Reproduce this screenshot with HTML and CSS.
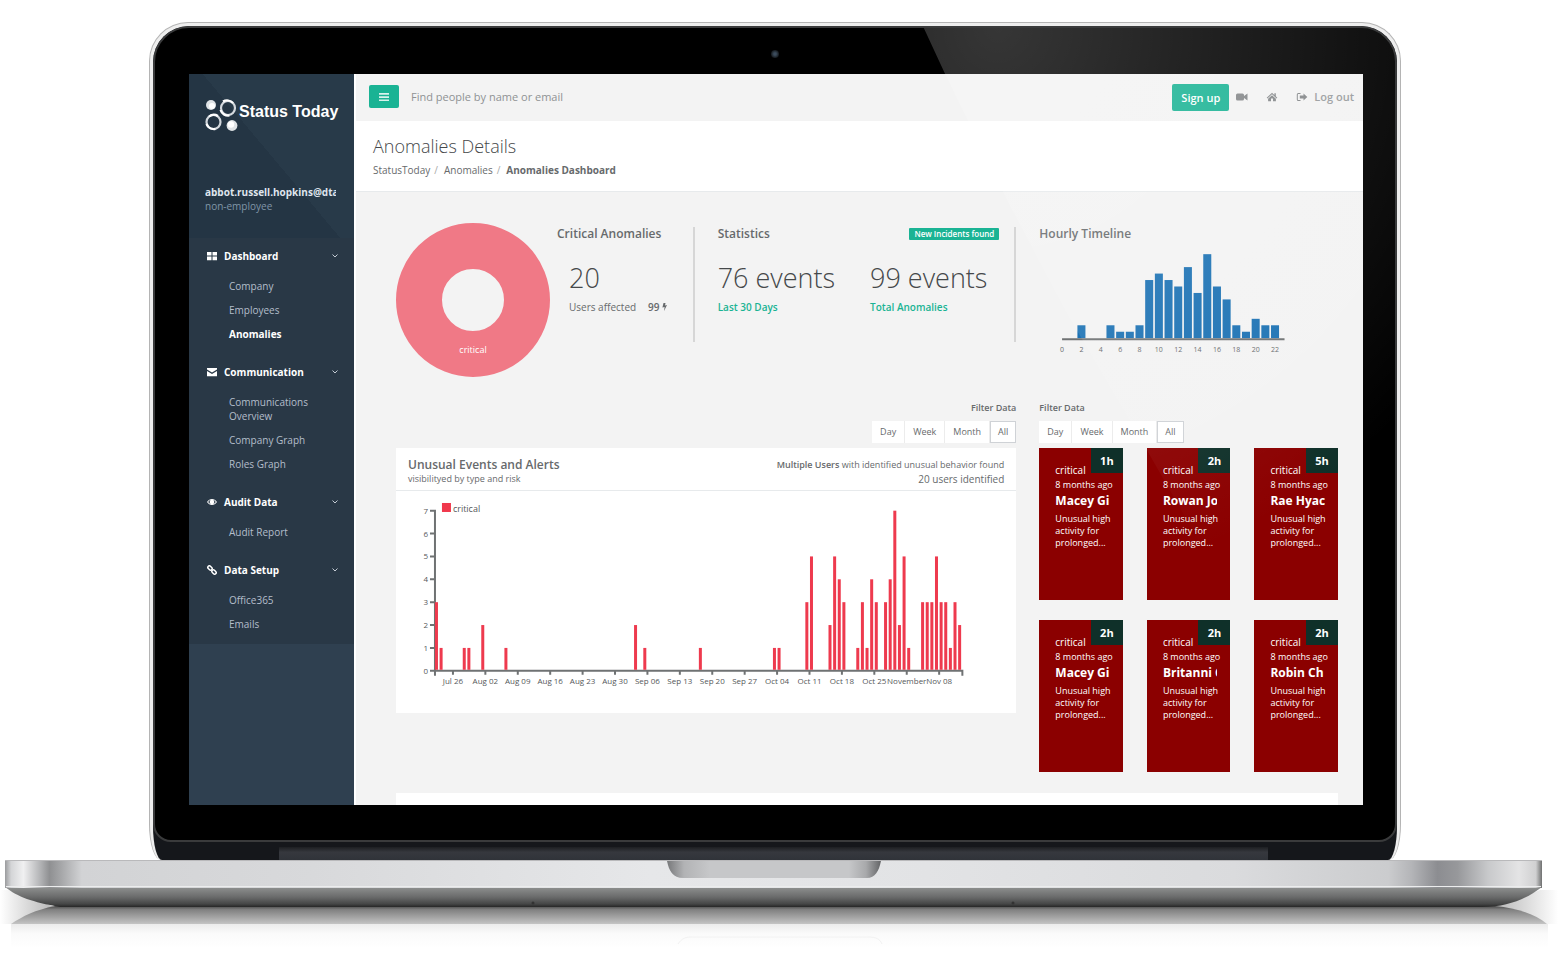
FILE: index.html
```html
<!DOCTYPE html>
<html lang="en">
<head>
<meta charset="utf-8">
<title>Status Today – Anomalies Details</title>
<link rel="stylesheet" href="styles.css">
</head>
<body>
<div class="lid">
  <div class="shell">
    <div class="bezel">
      <span class="camera"></span>
      <div class="screen">
        <aside class="sidebar">
          <header class="profile">
            <a class="brand" href="#">
              <svg class="brand-mark" viewBox="0 0 33 34" aria-hidden="true">
                <circle cx="6" cy="7" r="5" fill="#dfe3e6"/>
                <circle cx="7" cy="8" r="3" fill="#fff"/>
                <circle cx="23" cy="10" r="7" fill="none" stroke="#d3d8dd" stroke-width="2.200"/>
                <path d="M18 3.500a8 8 0 0 1 10 1.500M15.500 12a8 8 0 0 0 9 5.500" fill="none" stroke="#fff" stroke-width="2.200"/>
                <circle cx="8.500" cy="24" r="7" fill="none" stroke="#d3d8dd" stroke-width="2.200"/>
                <path d="M1.500 26a8 8 0 0 0 9 5M4 18.500a8 8 0 0 1 9-.5" fill="none" stroke="#fff" stroke-width="2.200"/>
                <circle cx="27" cy="27.500" r="5.400" fill="#dfe3e6"/>
                <circle cx="26" cy="26.500" r="3.200" fill="#fff"/>
              </svg>
              <span class="brand-name">Status Today</span>
            </a>
            <strong class="profile-mail">abbot.russell.hopkins@dtaa</strong>
            <span class="profile-role">non-employee</span>
          </header>
          <nav class="nav">
            <section class="nav-group">
              <button class="nav-head" type="button">
                <svg class="nav-icon" viewBox="0 0 10 10" aria-hidden="true"><path d="M0 1h4.500v3.600H0zM5.500 1H10v3.600H5.500zM0 5.600h4.500v3.600H0zM5.500 5.600H10v3.600H5.500z"/></svg>
                Dashboard
                <svg class="nav-arrow" viewBox="0 0 6 4" aria-hidden="true"><path d="M.5.5 3 3 5.500.5"/></svg>
              </button>
              <a class="nav-item" href="#">Company</a>
              <a class="nav-item" href="#">Employees</a>
              <a class="nav-item active" href="#">Anomalies</a>
            </section>
            <section class="nav-group">
              <button class="nav-head" type="button">
                <svg class="nav-icon" viewBox="0 0 10 10" aria-hidden="true"><path d="M0 1h10v1.500L5 5.500 0 2.500zM0 4l5 3 5-3v5.200H0z"/></svg>
                Communication
                <svg class="nav-arrow" viewBox="0 0 6 4" aria-hidden="true"><path d="M.5.5 3 3 5.500.5"/></svg>
              </button>
              <a class="nav-item" href="#">Communications Overview</a>
              <a class="nav-item" href="#">Company Graph</a>
              <a class="nav-item" href="#">Roles Graph</a>
            </section>
            <section class="nav-group">
              <button class="nav-head" type="button">
                <svg class="nav-icon" viewBox="0 0 10 10" aria-hidden="true"><path fill-rule="evenodd" d="M0 5c2.500-4 7.500-4 10 0-2.500 4-7.500 4-10 0zm1.200 0C2 6.200 2.800 6.800 3.600 7 2.400 5.800 2.400 4.200 3.600 3 2.800 3.200 2 3.800 1.200 5zm7.600 0C8 3.800 7.200 3.200 6.400 3c1.200 1.200 1.200 2.800 0 4 .8-.2 1.600-.8 2.400-2z"/></svg>
                Audit Data
                <svg class="nav-arrow" viewBox="0 0 6 4" aria-hidden="true"><path d="M.5.5 3 3 5.500.5"/></svg>
              </button>
              <a class="nav-item" href="#">Audit Report</a>
            </section>
            <section class="nav-group">
              <button class="nav-head" type="button">
                <svg class="nav-icon" viewBox="0 0 10 10" aria-hidden="true"><g fill="none" stroke="#fff" stroke-width="1.500"><rect x="-2.400" y="-1.500" width="4.800" height="3" rx="1.500" transform="translate(3 3) rotate(45)"/><rect x="-2.400" y="-1.500" width="4.800" height="3" rx="1.500" transform="translate(7 7) rotate(45)"/></g></svg>
                Data Setup
                <svg class="nav-arrow" viewBox="0 0 6 4" aria-hidden="true"><path d="M.5.5 3 3 5.500.5"/></svg>
              </button>
              <a class="nav-item" href="#">Office365</a>
              <a class="nav-item" href="#">Emails</a>
            </section>
          </nav>
        </aside>

        <main class="main">
          <div class="topbar">
            <button class="menu-toggle" type="button" aria-label="Toggle menu">
              <svg viewBox="0 0 10 10" aria-hidden="true"><path d="M0 1h10v1.700H0zM0 4.200h10v1.700H0zM0 7.400h10v1.700H0z"/></svg>
            </button>
            <input class="search" type="text" aria-label="Find people" placeholder="Find people by name or email">
            <button class="signup" type="button">Sign up</button>
            <a class="tool" href="#" aria-label="Video"><svg viewBox="0 0 12 10" aria-hidden="true"><path d="M1.500 1.500h5A1.500 1.500 0 0 1 8 3v1l3.500-2.500v7L8 6v1a1.500 1.500 0 0 1-1.500 1.500h-5A1.500 1.500 0 0 1 0 7V3a1.500 1.500 0 0 1 1.500-1.500z"/></svg></a>
            <a class="tool" href="#" aria-label="Home"><svg viewBox="0 0 12 10" aria-hidden="true"><path d="M6 .8 8.400 3V1.300h1.400v3L11.300 5.700l-.7.700L6 2.300 1.400 6.400l-.7-.7zM6 3.200l3.900 3.500V9.300H7V6.600H5v2.700H2.100V6.700z"/></svg></a>
            <a class="logout" href="#"><svg viewBox="0 0 12 10" aria-hidden="true"><path d="M4.500 1H2.300A1.500 1.500 0 0 0 .8 2.500v5A1.500 1.500 0 0 0 2.300 9h2.200V8H2.300a.5.5 0 0 1-.5-.5v-5a.5.5 0 0 1 .5-.5h2.200zM7.500 1.500 11.300 5 7.500 8.500v-2H3.800v-3h3.700z"/></svg>Log out</a>
          </div>

          <div class="heading">
            <h1>Anomalies Details</h1>
            <ol class="crumbs">
              <li><a href="#">StatusToday</a></li>
              <li><a href="#">Anomalies</a></li>
              <li><strong>Anomalies Dashboard</strong></li>
            </ol>
          </div>

          <div class="content">
            <section class="critical">
              <svg class="donut" viewBox="0 0 154 154" role="img" aria-label="critical">
                <circle cx="77" cy="77" r="54" fill="none" stroke="#f07986" stroke-width="46"/>
                <text x="77" y="130" text-anchor="middle">critical</text>
              </svg>
              <div class="critical-info">
                <h2>Critical Anomalies</h2>
                <div class="inset">
                  <p class="figure">20</p>
                  <p class="note"><span>Users affected</span><b>99 <svg viewBox="0 0 5 8" aria-hidden="true"><path d="M1.500 0h2L3 2.500 5 2 2 8l.6-4L.4 4.500z"/></svg></b></p>
                </div>
              </div>
            </section>

            <section class="stats">
              <div class="stats-head"><h2>Statistics</h2><span class="label">New Incidents found</span></div>
              <div class="stats-row">
                <div><p class="figure">76 events</p><p class="note green">Last 30 Days</p></div>
                <div><p class="figure">99 events</p><p class="note green">Total Anomalies</p></div>
              </div>
            </section>

            <section class="hourly">
              <h2>Hourly Timeline</h2>
              <svg id="hourly-chart" class="hourly-chart" viewBox="0 0 298 112" role="img" aria-label="Events by hour"></svg>
            </section>

            <section class="events">
              <div class="filter filter-end">
                <span class="filter-title">Filter Data</span>
                <div class="btn-group">
                  <button type="button">Day</button><button type="button">Week</button><button type="button">Month</button><button class="on" type="button">All</button>
                </div>
              </div>
              <div class="panel">
                <div class="panel-head">
                  <div><h2>Unusual Events and Alerts</h2><p class="small">visibilityed by type and risk</p></div>
                  <div class="panel-side"><p class="small"><b>Multiple Users</b> with identified unusual behavior found</p><p>20 users identified</p></div>
                </div>
                <svg id="events-chart" class="events-chart" viewBox="0 0 621 222" role="img" aria-label="Critical events by day"></svg>
              </div>
            </section>

            <section class="alerts">
              <div class="filter">
                <span class="filter-title">Filter Data</span>
                <div class="btn-group">
                  <button type="button">Day</button><button type="button">Week</button><button type="button">Month</button><button class="on" type="button">All</button>
                </div>
              </div>
              <div class="cards">
                <article class="card"><span class="age">1h</span><p class="level">critical</p><p class="when">8 months ago</p><h3>Macey Gi</h3><p class="desc">Unusual high activity for prolonged...</p></article>
                <article class="card"><span class="age">2h</span><p class="level">critical</p><p class="when">8 months ago</p><h3>Rowan Jo</h3><p class="desc">Unusual high activity for prolonged...</p></article>
                <article class="card"><span class="age">5h</span><p class="level">critical</p><p class="when">8 months ago</p><h3>Rae Hyac</h3><p class="desc">Unusual high activity for prolonged...</p></article>
                <article class="card"><span class="age">2h</span><p class="level">critical</p><p class="when">8 months ago</p><h3>Macey Gi</h3><p class="desc">Unusual high activity for prolonged...</p></article>
                <article class="card"><span class="age">2h</span><p class="level">critical</p><p class="when">8 months ago</p><h3>Britanni C</h3><p class="desc">Unusual high activity for prolonged...</p></article>
                <article class="card"><span class="age">2h</span><p class="level">critical</p><p class="when">8 months ago</p><h3>Robin Ch</h3><p class="desc">Unusual high activity for prolonged...</p></article>
              </div>
            </section>
            <section class="next-panel"></section>
          </div>
        </main>
      </div>
    </div>
    <div class="hinge"></div>
  </div>
</div>
<svg class="base" viewBox="0 0 1559 90" aria-hidden="true">
  <defs>
    <linearGradient id="metal">
      <stop offset="0" stop-color="#9a9b9d"/><stop offset=".004" stop-color="#d4d5d7"/><stop offset=".012" stop-color="#f0f0f1"/>
      <stop offset=".022" stop-color="#b8b9bb"/><stop offset=".029" stop-color="#8f9092"/><stop offset=".036" stop-color="#a4a5a7"/><stop offset=".05" stop-color="#d2d3d5"/>
      <stop offset=".2" stop-color="#d8d9db"/><stop offset=".42" stop-color="#e6e7e9"/><stop offset=".6" stop-color="#e2e3e5"/><stop offset=".8" stop-color="#dadbdd"/><stop offset=".9" stop-color="#cbccce"/>
      <stop offset=".915" stop-color="#b4b5b8"/><stop offset=".932" stop-color="#8c8d91"/><stop offset=".945" stop-color="#97989b"/><stop offset=".965" stop-color="#c8c9cb"/><stop offset=".985" stop-color="#e4e4e5"/><stop offset=".996" stop-color="#d0d0d1"/><stop offset="1" stop-color="#6f7070"/>
    </linearGradient>
    <linearGradient id="under" x2="0" y2="1">
      <stop offset="0" stop-color="#8f9190"/><stop offset=".5" stop-color="#6a6b6b"/><stop offset=".85" stop-color="#454646"/><stop offset="1" stop-color="#262626"/>
    </linearGradient>
    <linearGradient id="shade" x2="0" y2="1">
      <stop offset="0" stop-color="#4a4a4a"/><stop offset=".2" stop-color="#808080"/><stop offset="1" stop-color="#c4c4c4"/>
    </linearGradient>
    <linearGradient id="mirror" x2="0" y2="1">
      <stop offset="0" stop-color="#ececec"/><stop offset=".4" stop-color="#fafafa"/><stop offset="1" stop-color="#fff"/>
    </linearGradient>
    <linearGradient id="notch">
      <stop offset="0" stop-color="#77787a"/><stop offset=".08" stop-color="#b2b3b5"/><stop offset=".2" stop-color="#c6c7c9"/><stop offset=".85" stop-color="#c6c7c9"/><stop offset=".93" stop-color="#a8a9ab"/><stop offset="1" stop-color="#636466"/>
    </linearGradient>
    <linearGradient id="side-l"><stop offset="0" stop-color="#fff"/><stop offset="1" stop-color="#b4b4b4"/></linearGradient>
    <linearGradient id="side-r"><stop offset="0" stop-color="#b4b4b4"/><stop offset="1" stop-color="#fff"/></linearGradient>
  </defs>
  <path d="M0 30h8l47 17-43 17H0z" fill="url(#side-l)"/>
  <path d="M1558 30h-18l-48 17 55 17h11z" fill="url(#side-r)"/>
  <path d="M11 64h1537v24H11z" fill="url(#mirror)"/>
  <path d="M55 46h1440c22 2 40 8 52 18H11c12-8 24-14 44-18z" fill="url(#shade)"/>
  <path d="M678 84c4-6 8-7 14-7h176c8 0 12 2 14 7" fill="none" stroke="#f2f2f2"/>
  <path d="M5 27h1537c-16 12-34 20-60 20H60C32 42 18 37 5 27z" fill="url(#under)"/>
  <path d="M5 0h1537v28H5z" fill="url(#metal)"/>
  <path d="M5 0h1537v1H5z" fill="#b9b9bb"/>
  <path d="M6 26h1535v1H6z" fill="#eceded"/>
  <path d="M667 1h214c-2 10-6 17-14 17H683c-10 0-14-7-16-17z" fill="url(#notch)"/>
  <circle cx="533" cy="43" r="1.500" fill="#333"/><circle cx="1013" cy="43" r="1.500" fill="#333"/>
</svg>
<script src="charts.js"></script>
</body>
</html>
```
FILE: styles.css
```css
* { box-sizing: border-box; }
body {
  margin: 0;
  background: #fff;
  color: #676a6c;
  font: 10px/14px "Open Sans", "Noto Sans", sans-serif;
}
h1, h2, h3, p, ol { margin: 0; padding: 0; font-weight: 400; }
a { color: inherit; text-decoration: none; }
button, input { font: inherit; color: inherit; border: 0; margin: 0; padding: 0; background: none; }
svg { display: block; flex: none; }

/* Laptop lid */
.lid {
  margin: 22px 158px 0 149px;
  padding: 3px 3px 0;
  border: 1px solid #b4b4b4;
  border-bottom: 0;
  border-radius: 39px 39px 12px 12px / 39px 39px 36px 36px;
  background: #eee;
}
.shell { background: #15171b; border-radius: 36px 36px 9px 9px / 36px 36px 34px 34px; overflow: hidden; }
.bezel {
  position: relative;
  padding: 46px 32px 35px 34px;
  border: 2px solid #3a3b3c;
  border-radius: 36px 36px 18px 18px;
  background: #000;
}
.bezel::after {
  content: "";
  position: absolute;
  inset: 0;
  pointer-events: none;
  border-radius: 34px 34px 0 0;
  background: radial-gradient(circle 560px at 68% 0, rgba(255, 255, 255, .21), rgba(255, 255, 255, .1) 50%, rgba(255, 255, 255, 0));
  clip-path: polygon(62% 0, 63.700% 5.600%, 69% 22%, 73.500% 35%, 80% 52%, 86% 68%, 100% 100%, 100% 0);
}
.camera {
  position: absolute;
  top: 22px;
  left: 50%;
  width: 8px;
  height: 8px;
  margin-left: -4px;
  border-radius: 50%;
  background: radial-gradient(circle, #3c4c5c 20%, #15191d 70%);
}
.hinge {
  height: 18px;
  padding: 5px 129px 0 126px;
}
.hinge::before {
  content: "";
  display: block;
  height: 13px;
  background: linear-gradient(#1d1f22, #36383e 40%, #303339);
}
.base { width: 100%; height: auto; }

.screen { display: flex; background: #f3f3f3; overflow: hidden; }

/* Sidebar */
.sidebar { flex: 0 0 165px; min-width: 0; background: #2f4050; color: #a7b1c2; }
.profile {
  display: flex;
  flex-direction: column;
  height: 164px;
  padding: 24px 18px 0 16px;
  background: linear-gradient(50deg, #243544 50%, #283a49 50%);
}
.brand { display: flex; align-items: center; margin-bottom: 53px; height: 34px; }
.brand-mark { width: 33px; height: 34px; }
.brand-name { margin-top: -6px; padding-left: 1px; font: 700 16px/28px "Liberation Sans Narrow", "Liberation Sans", sans-serif; color: #fff; white-space: nowrap; }
.profile-mail { overflow: hidden; white-space: nowrap; color: #dfe4ed; font-weight: 700; }
.profile-role { color: #8095a8; }
.nav { background: #293846; }
.nav-group { padding-bottom: 8px; }
.nav-head {
  display: flex;
  align-items: center;
  width: 100%;
  padding: 11px 16px 11px 18px;
  color: #fff;
  font-weight: 700;
  text-align: left;
}
.nav-icon { width: 10px; height: 10px; margin-right: 7px; fill: #fff; }
.nav-arrow { width: 6px; height: 4px; margin-left: auto; fill: none; stroke: #c5ccd5; }
.nav-item { display: block; padding: 5px 30px 5px 40px; color: #b4becb; }
.nav-item.active { color: #fff; font-weight: 700; }

/* Top bar */
.main { flex: 1; min-width: 0; border-left: 2px solid #fff; }
.topbar { display: flex; align-items: center; height: 47px; padding: 0 9px 2px 13px; color: #999c9e; font-size: 11px; }
.menu-toggle { display: grid; place-items: center; width: 30px; height: 23px; border-radius: 2px; background: #1ab394; }
.menu-toggle svg { width: 10px; height: 10px; fill: #d8f2ec; }
.search { flex: 1; min-width: 0; margin-left: 12px; height: 24px; outline: 0; }
.search::placeholder { color: #8f9294; opacity: 1; }
.signup { height: 27px; width: 57px; margin: 2px 7px 0 0; border-radius: 2px; background: #1ab394; color: #fff; font-weight: 600; }
.tool { margin-right: 18px; }
.tool svg, .logout svg { width: 12px; height: 10px; fill: #85888a; }
.logout { display: flex; align-items: center; gap: 6px; font-weight: 600; }

.heading { height: 71px; padding: 13px 17px 0; background: #fff; border-bottom: 1px solid #e7eaec; }
h1 { font-size: 18px; line-height: 24px; font-weight: 300; color: #45484a; }
.crumbs { display: flex; margin-top: 5px; list-style: none; }
.crumbs li + li::before { content: "/"; padding: 0 6px 0 4px; color: #aaa; }

/* Dashboard grid */
.content {
  display: grid;
  grid-template-columns: repeat(3, minmax(0, 1fr));
  column-gap: 23px;
  padding: 31px 25px 0 40px;
}
h2 { font-size: 12px; line-height: 14px; font-weight: 600; white-space: nowrap; }
.critical { display: flex; }
.donut { width: 154px; height: 154px; }
.donut text { font-size: 9px; fill: #fff; }
.critical-info, .stats { height: 115px; margin-top: 4px; border-right: 2px solid #d6d6d6; }
.critical-info { flex: 1; padding-left: 7px; }
.inset { padding-left: 12px; }
.figure { margin-top: 19px; font-size: 27px; line-height: 36px; font-weight: 300; white-space: nowrap; color: #45484a; }
.note { display: flex; gap: 12px; margin-top: 4px; }
.note b { display: flex; align-items: center; gap: 2px; font-weight: 600; }
.note svg { width: 5px; height: 8px; fill: #676a6c; }
.green { color: #1ab394; font-weight: 600; }
.stats-head { display: flex; justify-content: space-between; align-items: center; padding-right: 15px; height: 14px; }
.label { padding: 0 5px; border-radius: 1px; background: #1ab394; color: #fff; font-size: 8px; line-height: 12px; font-weight: 600; }
.stats-row { display: grid; grid-template-columns: 1fr 1fr; gap: 8px; }
.hourly { padding-top: 4px; }
.hourly-chart { width: 100%; height: auto; font-size: 7px; fill: #676a6c; }

.events { grid-column: span 2; }
.events, .alerts { margin-top: 24px; }
.filter { display: flex; flex-direction: column; align-items: flex-start; gap: 6px; margin-bottom: 5px; font-size: 9px; }
.filter-end { align-items: flex-end; }
.filter-title { font-weight: 600; }
.btn-group { display: flex; gap: 1px; background: #ececec; }
.btn-group button { height: 22px; padding: 0 7px; background: #fff; border: 1px solid #fff; }
.btn-group .on { border-color: #cfd2d6; }

.panel { background: #fff; }
.panel-head { display: flex; justify-content: space-between; height: 43px; padding: 10px 12px 0; border-bottom: 1px solid #e7eaec; }
.panel-side { text-align: right; }
.panel-side b { font-weight: 600; }
.small { font-size: 9px; }
.events-chart { width: 100%; height: auto; font-size: 8px; fill: #55585a; }
.events-chart .legend { font-size: 9px; }
.axis { fill: none; stroke: #6f7273; stroke-width: 2; }

.cards { display: grid; grid-template-columns: repeat(3, minmax(0, 1fr)); gap: 20px 24px; }
.card { position: relative; height: 152px; padding: 15px 8px 0 16px; background: #8b0000; color: #fff; font-weight: 600; }
.age { position: absolute; top: 0; right: 0; width: 32px; height: 25px; background: #0f3029; font-size: 11px; line-height: 25px; font-weight: 700; text-align: center; }
.when { font-size: 9px; line-height: 16px; white-space: nowrap; }
.card h3 { overflow: hidden; margin-right: 5px; white-space: nowrap; font-size: 12px; line-height: 16px; font-weight: 700; }
.desc { margin-top: 4px; font-size: 9px; line-height: 12px; }

.next-panel { grid-column: 1 / -1; height: 12px; margin-top: 21px; background: #fff; }
```
FILE: charts.js
```js
const NS = "http://www.w3.org/2000/svg";

function add(parent, name, attrs, text) {
  const node = document.createElementNS(NS, name);
  for (const key in attrs) node.setAttribute(key, attrs[key]);
  if (text !== undefined) node.textContent = text;
  parent.appendChild(node);
}

/* Events per hour of the day */
const hourly = document.getElementById("hourly-chart");
const hours = [0, 0, 2, 0, 0, 2, 1, 1, 2, 9, 10, 9, 8, 11, 7, 13, 8, 6, 2, 1, 3, 2, 2];
hours.forEach((count, hour) => {
  const x = 23 + hour * 9.66;
  add(hourly, "rect", { x: x - 4, y: 97 - count * 6.45, width: 8, height: count * 6.45, fill: "#1c72b4" });
  if (hour % 2 === 0) add(hourly, "text", { x: x, y: 111, "text-anchor": "middle" }, hour);
});
add(hourly, "path", { class: "axis", d: "M23 98H245" });

/* Critical events per day, keyed by day offset from the first one */
const events = document.getElementById("events-chart");
const days = {
  0: 3, 1: 1, 6: 1, 7: 1, 10: 2, 15: 1, 43: 2, 45: 1, 57: 1, 73: 1, 74: 1, 80: 3, 81: 5,
  85: 2, 86: 5, 87: 4, 88: 3, 91: 1, 92: 3, 93: 1, 94: 4, 95: 3, 97: 3, 98: 4, 99: 7,
  100: 2, 101: 5, 102: 1, 105: 3, 106: 3, 107: 3, 108: 5, 109: 3, 110: 3, 111: 1, 112: 3, 113: 2
};
const weeks = ["Jul 26", "Aug 02", "Aug 09", "Aug 16", "Aug 23", "Aug 30", "Sep 06", "Sep 13",
  "Sep 20", "Sep 27", "Oct 04", "Oct 11", "Oct 18", "Oct 25", "November", "Nov 08"];
const left = 39, zero = 180, unit = 22.9, step = 4.635;

let axis = `M${left - 5} ${zero - 7 * unit}H${left}V${zero}H${left + 528}v5M${left} ${zero}v5`;
for (let n = 0; n <= 7; n++) {
  axis += `M${left - 5} ${zero - n * unit}h5`;
  add(events, "text", { x: left - 7, y: zero - n * unit + 3, "text-anchor": "end" }, n);
}
weeks.forEach((label, i) => {
  const x = 57 + i * 32.45;
  axis += `M${x} ${zero}v4`;
  add(events, "text", { x: x, y: zero + 13, "text-anchor": "middle" }, label);
});
add(events, "path", { class: "axis", d: axis });
for (const day in days) {
  add(events, "rect", { x: left + day * step, y: zero - days[day] * unit, width: 3, height: days[day] * unit - 1, fill: "#ee3a4e" });
}
add(events, "rect", { x: 46, y: 12, width: 9, height: 9, fill: "#f0384c" });
add(events, "text", { class: "legend", x: 57, y: 21 }, "critical");
```
